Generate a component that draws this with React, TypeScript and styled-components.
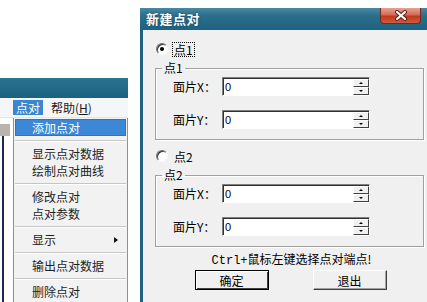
import React from "react";
import styled, { createGlobalStyle } from "styled-components";

const Global = createGlobalStyle`
  html, body { margin: 0; padding: 0; background: #ffffff; }
  body { font-family: "Noto Sans CJK SC", "Noto Sans", sans-serif; font-size: 12px; color: #000; }
`;

const Screen = styled.div`
  width: 427px;
  height: 302px;
  overflow: hidden;
  display: flex;
  align-items: flex-start;
  background: #ffffff;
`;

/* ---------- left: main window with open menu ---------- */
const LeftPane = styled.div`
  width: 128px;
  flex: none;
  display: flex;
  flex-direction: column;
  padding-top: 78px;
`;

const TealBar = styled.div`
  height: 20px;
  background: linear-gradient(#2a7391, #1b6180);
`;

const MenuBar = styled.div`
  height: 19px;
  display: flex;
  align-items: center;
  padding-left: 13px;
  gap: 5px;
  background: #f4f6f8;
  border-bottom: 1px solid #e2e6ea;
`;

const MenuTitle = styled.span<{ $active?: boolean }>`
  height: 15px;
  line-height: 15px;
  padding: 0 3px;
  font-size: 12px;
  color: ${(p) => (p.$active ? "#ffffff" : "#1a1a1a")};
  background: ${(p) => (p.$active ? "#3b86d3" : "transparent")};
  u { text-decoration: underline; }
`;

const MenuArea = styled.div`
  display: flex;
  height: 200px;
`;

const Strip = styled.div`
  width: 13px;
  flex: none;
  display: flex;
  flex-direction: column;
`;

const StripBlock = styled.div`
  margin-top: 6px;
  width: 10px;
  height: 12px;
  background: #b9b4ad;
`;

const StripLine = styled.div`
  margin-left: 2px;
  width: 2px;
  flex: 1;
  background: #1d2a55;
`;

const Dropdown = styled.div`
  flex: 1;
  display: flex;
  flex-direction: column;
  background: #f2f2f2;
  border-left: 1px solid #8e8f8f;
  border-right: 1px solid #8e8f8f;
  padding: 1px 1px 0 1px;
`;

const Item = styled.div<{ $active?: boolean }>`
  height: 17px;
  line-height: 17px;
  display: flex;
  align-items: center;
  padding-left: 17px;
  padding-right: 8px;
  font-size: 12px;
  color: ${(p) => (p.$active ? "#ffffff" : "#1e1e1e")};
  background: ${(p) => (p.$active ? "#3c88d6" : "transparent")};
  box-shadow: ${(p) => (p.$active ? "inset 0 0 0 1px #2f74c0" : "none")};
`;

const ItemLabel = styled.span`
  flex: 1;
`;

const SubArrow = styled.span`
  width: 0;
  height: 0;
  border-top: 3.5px solid transparent;
  border-bottom: 3.5px solid transparent;
  border-left: 4px solid #111;
`;

const Sep = styled.div`
  height: 9px;
  display: flex;
  flex-direction: column;
  justify-content: center;
  &::before {
    content: "";
    height: 1px;
    background: #c5c5c5;
  }
  &::after {
    content: "";
    height: 1px;
    background: #ffffff;
  }
`;

/* ---------- dialog ---------- */
const Dialog = styled.div`
  margin-left: 12px;
  margin-top: 8px;
  width: 292px;
  flex: none;
  display: flex;
  flex-direction: column;
`;

const TitleBar = styled.div`
  height: 22px;
  display: flex;
  align-items: flex-start;
  background: linear-gradient(#4a88a2 0%, #2b6f8b 35%, #1f6280 100%);
`;

const Title = styled.span`
  margin-left: 6px;
  line-height: 22px;
  font-size: 13px;
  font-weight: bold;
  color: #ffffff;
  letter-spacing: 0.5px;
  text-shadow: 0 0 2px #123c50;
`;

const CloseBtn = styled.div`
  margin-left: auto;
  margin-right: 11px;
  width: 39px;
  height: 15px;
  display: flex;
  align-items: center;
  justify-content: center;
  border: 1px solid #6d2c22;
  border-top: none;
  border-radius: 0 0 4px 4px;
  background: linear-gradient(#e9a292 0%, #d46b55 45%, #c0391f 55%, #cf5a3d 100%);
`;

const Body = styled.div`
  height: 280px;
  background: #f0f0f0;
  border-left: 3px solid #1f6280;
  padding: 11px 8px 0 12px;
  display: flex;
  flex-direction: column;
`;

const RadioRow = styled.label<{ $mt?: number }>`
  height: 16px;
  display: flex;
  align-items: center;
  margin: ${(p) => p.$mt ?? 0}px 0 0 1px;
  gap: 5px;
`;

const RadioDot = styled.span<{ $checked?: boolean }>`
  width: 10px;
  height: 10px;
  border-radius: 50%;
  background: #ffffff;
  border: 1px solid;
  border-color: #707070 #f8f8f8 #f8f8f8 #707070;
  box-shadow: inset 1px 1px 0 #303030;
  display: flex;
  align-items: center;
  justify-content: center;
  &::after {
    content: "";
    display: ${(p) => (p.$checked ? "block" : "none")};
    width: 4px;
    height: 4px;
    border-radius: 50%;
    background: #000;
  }
`;

const RadioText = styled.span<{ $focus?: boolean }>`
  font-size: 12px;
  line-height: 13px;
  padding: 0 1px;
  outline: ${(p) => (p.$focus ? "1px dotted #000" : "none")};
`;

const Group = styled.fieldset`
  margin: 4px 0 0 0;
  padding: 2px 0 10px 0;
  border: 1px solid #a0a0a0;
  box-shadow: inset 1px 1px 0 #ffffff, 1px 1px 0 #ffffff;
  display: flex;
  flex-direction: column;
  gap: 14px;
  min-width: 0;
`;

const Legend = styled.legend`
  margin-left: 6px;
  padding: 0 2px;
  font-size: 12px;
  line-height: 14px;
`;

const FieldRow = styled.div`
  display: flex;
  align-items: center;
  height: 19px;
  padding-left: 17px;
`;

const FieldLabel = styled.span`
  width: 49px;
  font-size: 12px;
`;

const Spin = styled.div`
  display: flex;
  width: 148px;
  height: 19px;
  box-sizing: border-box;
  background: #ffffff;
  border: 1px solid;
  border-color: #808080 #ffffff #ffffff #808080;
  box-shadow: inset 1px 1px 0 #303030;
`;

const SpinText = styled.span`
  flex: 1;
  padding: 1px 0 0 2px;
  font-family: "Liberation Sans", sans-serif;
  font-size: 11px;
  line-height: 16px;
`;

const SpinButtons = styled.div`
  width: 16px;
  display: flex;
  flex-direction: column;
  padding-top: 1px;
`;

const SpinBtn = styled.div`
  flex: 1;
  display: flex;
  align-items: center;
  justify-content: center;
  background: #f0f0f0;
  border: 1px solid;
  border-color: #ffffff #404040 #404040 #ffffff;
`;

const Tri = styled.span<{ $down?: boolean }>`
  width: 0;
  height: 0;
  border-left: 2px solid transparent;
  border-right: 2px solid transparent;
  ${(p) => (p.$down ? "border-top: 2px solid #000;" : "border-bottom: 2px solid #000;")}
`;

const Hint = styled.div`
  margin-top: 5px;
  height: 14px;
  line-height: 14px;
  text-align: center;
  font-size: 12px;
  padding-left: 4px;
`;

const HintLatin = styled.span`
  font-family: "Liberation Mono", monospace;
  font-size: 12px;
`;

const ButtonRow = styled.div`
  margin-top: 4px;
  display: flex;
  justify-content: center;
  gap: 44px;
  padding-left: 2px;
`;

const Button = styled.div<{ $default?: boolean }>`
  width: 74px;
  height: 20px;
  box-sizing: border-box;
  display: flex;
  align-items: center;
  justify-content: center;
  font-size: 12px;
  background: #f0f0f0;
  border: 1px solid;
  border-color: ${(p) => (p.$default ? "#000" : "#ffffff #404040 #404040 #ffffff")};
  box-shadow: ${(p) =>
    p.$default ? "inset 1px 1px 0 #ffffff, inset -1px -1px 0 #404040" : "inset -1px -1px 0 #a0a0a0"};
`;

const SpinField = ({ label }: { label: string }) => (
  <FieldRow>
    <FieldLabel>{label}</FieldLabel>
    <Spin>
      <SpinText>0</SpinText>
      <SpinButtons>
        <SpinBtn>
          <Tri />
        </SpinBtn>
        <SpinBtn>
          <Tri $down />
        </SpinBtn>
      </SpinButtons>
    </Spin>
  </FieldRow>
);

export default function App() {
  return (
    <>
      <Global />
      <Screen>
        <LeftPane>
          <TealBar />
          <MenuBar>
            <MenuTitle $active>点对</MenuTitle>
            <MenuTitle>
              帮助(<u>H</u>)
            </MenuTitle>
          </MenuBar>
          <MenuArea>
            <Strip>
              <StripBlock />
              <StripLine />
            </Strip>
            <Dropdown>
              <Item $active>
                <ItemLabel>添加点对</ItemLabel>
              </Item>
              <Sep />
              <Item>
                <ItemLabel>显示点对数据</ItemLabel>
              </Item>
              <Item>
                <ItemLabel>绘制点对曲线</ItemLabel>
              </Item>
              <Sep />
              <Item>
                <ItemLabel>修改点对</ItemLabel>
              </Item>
              <Item>
                <ItemLabel>点对参数</ItemLabel>
              </Item>
              <Sep />
              <Item>
                <ItemLabel>显示</ItemLabel>
                <SubArrow />
              </Item>
              <Sep />
              <Item>
                <ItemLabel>输出点对数据</ItemLabel>
              </Item>
              <Sep />
              <Item>
                <ItemLabel>删除点对</ItemLabel>
              </Item>
            </Dropdown>
          </MenuArea>
        </LeftPane>

        <Dialog>
          <TitleBar>
            <Title>新建点对</Title>
            <CloseBtn>
              <svg width="14" height="11" viewBox="0 0 14 11">
                <path d="M3 2 L11 9 M11 2 L3 9" stroke="#5a1d14" strokeWidth="4" strokeLinecap="round" />
                <path d="M3 2 L11 9 M11 2 L3 9" stroke="#ffffff" strokeWidth="2.2" strokeLinecap="round" />
              </svg>
            </CloseBtn>
          </TitleBar>
          <Body>
            <RadioRow>
              <RadioDot $checked />
              <RadioText $focus>点1</RadioText>
            </RadioRow>
            <Group>
              <Legend>点1</Legend>
              <SpinField label="面片X：" />
              <SpinField label="面片Y：" />
            </Group>
            <RadioRow $mt={8}>
              <RadioDot />
              <RadioText>点2</RadioText>
            </RadioRow>
            <Group>
              <Legend>点2</Legend>
              <SpinField label="面片X：" />
              <SpinField label="面片Y：" />
            </Group>
            <Hint>
              <HintLatin>Ctrl+</HintLatin>鼠标左键选择点对端点!
            </Hint>
            <ButtonRow>
              <Button $default>确定</Button>
              <Button>退出</Button>
            </ButtonRow>
          </Body>
        </Dialog>
      </Screen>
    </>
  );
}
